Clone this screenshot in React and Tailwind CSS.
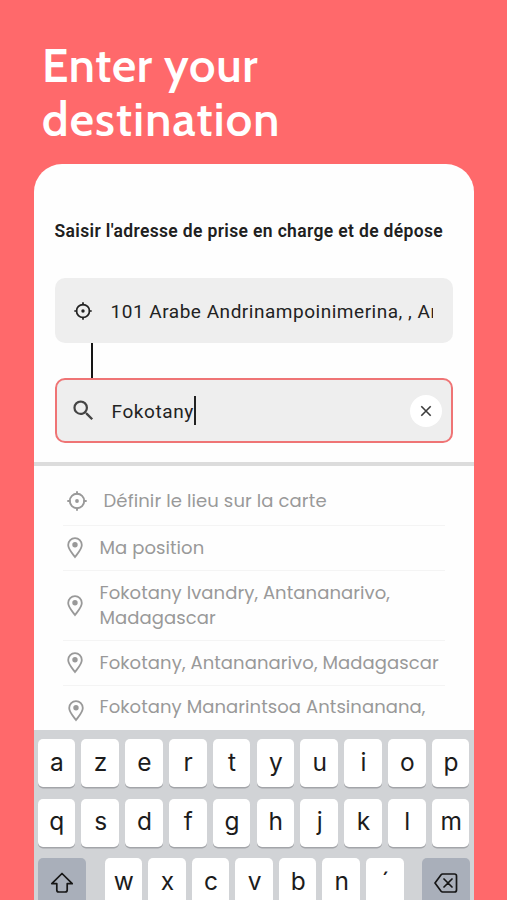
import React from "react";

function Crosshair({ size, className }) {
  return (
    <svg width={size} height={size} viewBox="0 0 20 20" fill="none" stroke="currentColor" strokeWidth="1.9" className={className}>
      <circle cx="10" cy="10" r="7.2" />
      <path d="M10 0.3V3.600M10 16.400v3.300M0.300 10H3.600M16.400 10h3.300" />
      <circle cx="10" cy="10" r="1.900" fill="currentColor" stroke="none" />
    </svg>
  );
}

function Pin({ className = "" }) {
  return (
    <svg width="16" height="22" viewBox="0 0 16 22" fill="none" stroke="currentColor" strokeWidth="1.8" className={`shrink-0 ${className}`}>
      <path d="M8 20C5.500 16.600 1.200 12.300 1.200 8a6.800 6.800 0 0 1 13.600 0c0 4.300-4.300 8.600-6.800 12Z" />
      <circle cx="8" cy="7.800" r="2.700" fill="currentColor" stroke="none" />
    </svg>
  );
}

function Key({ children }) {
  return (
    <div className="flex h-12 w-[37.600px] shrink-0 items-center justify-center rounded-[5px] bg-white pb-[2px] pl-px font-[Inter,sans-serif] text-[24.500px] font-normal text-[#1c1c1c] shadow-[0_1.5px_0_#a3a5a9]">
      {children}
    </div>
  );
}

function KeyRow({ letters }) {
  return (
    <div className="flex justify-between">
      {letters.map((letter) => (
        <Key key={letter}>{letter}</Key>
      ))}
    </div>
  );
}

function Place({ children, height, last }) {
  return (
    <div className={`flex items-center ${height} ${last ? "" : "border-b-[1.5px] border-[#f4f4f4]"}`}>
      {children}
    </div>
  );
}

const placeText = "whitespace-nowrap font-[Poppins,Inter,sans-serif] text-[18px] leading-[25px] text-[#999]";

export default function App() {
  return (
    <main className="h-[900px] w-[507px] overflow-hidden bg-[#ff696b]">
      <header className="h-[164px] pl-[42px] pt-[39px]">
        <h1 className="font-[Cabin,Lato,sans-serif] text-[47px] font-semibold leading-[54px] text-white">
          <span className="block w-max tracking-[0.700px]">Enter your</span>
          <span className="block w-max tracking-[1.200px]">destination</span>
        </h1>
      </header>

      <section className="mx-auto flex h-[736px] w-[440px] flex-col overflow-hidden rounded-t-[28px] bg-[#fefefe]">
        <div className="h-[298px] shrink-0 px-[21px] pt-[55px] font-[Roboto,sans-serif]">
          <h2 className="h-[59px] w-max whitespace-nowrap text-[17.500px] font-semibold leading-[25px] tracking-[0.350px] text-[#202020]">
            Saisir l'adresse de prise en charge et de dépose
          </h2>
          <div className="flex h-[65px] w-[398px] items-center rounded-[10px] bg-[#eee] pl-[19px]">
            <Crosshair size={18} className="shrink-0 text-[#222]" />
            <span className="ml-[19px] mt-[3px] w-[322px] overflow-hidden whitespace-nowrap text-[19px] leading-6 tracking-[0.520px] text-[#222]">
              101 Arabe Andrinampoinimerina, , Antananarivo
            </span>
          </div>
          <div className="ml-[36px] h-[35px] w-[2.500px] bg-[#161616]" />
          <div className="flex h-[65px] w-[398px] items-center rounded-[10px] border-2 border-[#ef7475] bg-[#eee] pl-[13px] pr-[9px]">
            <svg width="27" height="27" viewBox="0 0 24 24" fill="#444" className="shrink-0">
              <path d="M15.500 14h-.79l-.28-.27A6.471 6.471 0 0 0 16 9.500 6.500 6.500 0 1 0 9.500 16c1.610 0 3.090-.59 4.230-1.570l.27.28v.79l5 4.990L20.490 19l-4.990-5zm-6 0C7.010 14 5 11.990 5 9.500S7.010 5 9.500 5 14 7.010 14 9.500 11.990 14 9.500 14z" />
            </svg>
            <span className="ml-[15px] mt-[3px] text-[19px] leading-6 tracking-[0.600px] text-[#222]">Fokotany</span>
            <span className="h-[29px] w-[2.500px] bg-[#222]" />
            <button className="ml-auto flex h-8 w-8 items-center justify-center rounded-full bg-white text-[#3c3c3c]">
              <svg width="12" height="12" viewBox="0 0 12 12" fill="none" stroke="currentColor" strokeWidth="1.6">
                <path d="M1.300 1.300l9.400 9.400M10.700 1.300l-9.400 9.400" />
              </svg>
            </button>
          </div>
        </div>
        <div className="h-1 shrink-0 bg-[#dcdcdc]" />

        <div className="h-[264px] shrink-0 overflow-hidden px-[29px] text-[#999]">
          <Place height="h-[60px]">
            <Crosshair size={20} className="ml-1 mt-[11px] shrink-0" />
            <span className={`ml-[17px] mt-[10px] tracking-[0.120px] ${placeText}`}>Définir le lieu sur la carte</span>
          </Place>
          <Place height="h-[45px]">
            <Pin className="ml-1" />
            <span className={`-mt-px ml-[17px] tracking-[0.070px] ${placeText}`}>Ma position</span>
          </Place>
          <Place height="h-[69.500px]">
            <Pin className="ml-1 mt-px" />
            <span className={`ml-[17px] tracking-[0.070px] ${placeText}`}>Fokotany Ivandry, Antananarivo,<br />Madagascar</span>
          </Place>
          <Place height="h-[45px]">
            <Pin className="ml-1" />
            <span className={`ml-[17px] tracking-[0.080px] ${placeText}`}>Fokotany, Antananarivo, Madagascar</span>
          </Place>
          <Place height="h-[45px]" last>
            <Pin className="ml-[5px] mt-[5px]" />
            <span className={`-mt-[3px] ml-4 tracking-[0.070px] ${placeText}`}>Fokotany Manarintsoa Antsinanana,</span>
          </Place>
        </div>

        <div className="flex h-[170px] shrink-0 flex-col gap-[11.500px] bg-[#d1d3d6] px-1 pt-[9px]">
          <KeyRow letters={["a", "z", "e", "r", "t", "y", "u", "i", "o", "p"]} />
          <KeyRow letters={["q", "s", "d", "f", "g", "h", "j", "k", "l", "m"]} />
          <div className="flex">
            <div className="flex h-12 w-12 items-center justify-center rounded-[5px] bg-[#a9afba] pt-px text-[#161616]">
              <svg width="24" height="22" viewBox="0 0 24 22" fill="none" stroke="currentColor" strokeWidth="1.700" strokeLinejoin="round">
                <path d="M12 1.500L1.800 11.700h5V18a2 2 0 0 0 2 2h6.400a2 2 0 0 0 2-2v-6.300h5L12 1.500Z" />
              </svg>
            </div>
            <div className="ml-[19px] flex gap-[6px]">
              {["w", "x", "c", "v", "b", "n", "´"].map((letter) => (
                <Key key={letter}>{letter}</Key>
              ))}
            </div>
            <div className="ml-auto flex h-12 w-12 items-center justify-center rounded-[5px] bg-[#a9afba] pt-px text-[#161616]">
              <svg width="24" height="20" viewBox="0 0 24 20" fill="none" stroke="currentColor" strokeWidth="1.700" strokeLinejoin="round" strokeLinecap="round">
                <path d="M8.600 1H20.500a2 2 0 0 1 2 2v14a2 2 0 0 1-2 2H8.600a2 2 0 0 1-1.500-.7L1 10 7.100 1.700A2 2 0 0 1 8.600 1ZM10 6l8 8M18 6l-8 8" />
              </svg>
            </div>
          </div>
        </div>
      </section>
    </main>
  );
}
